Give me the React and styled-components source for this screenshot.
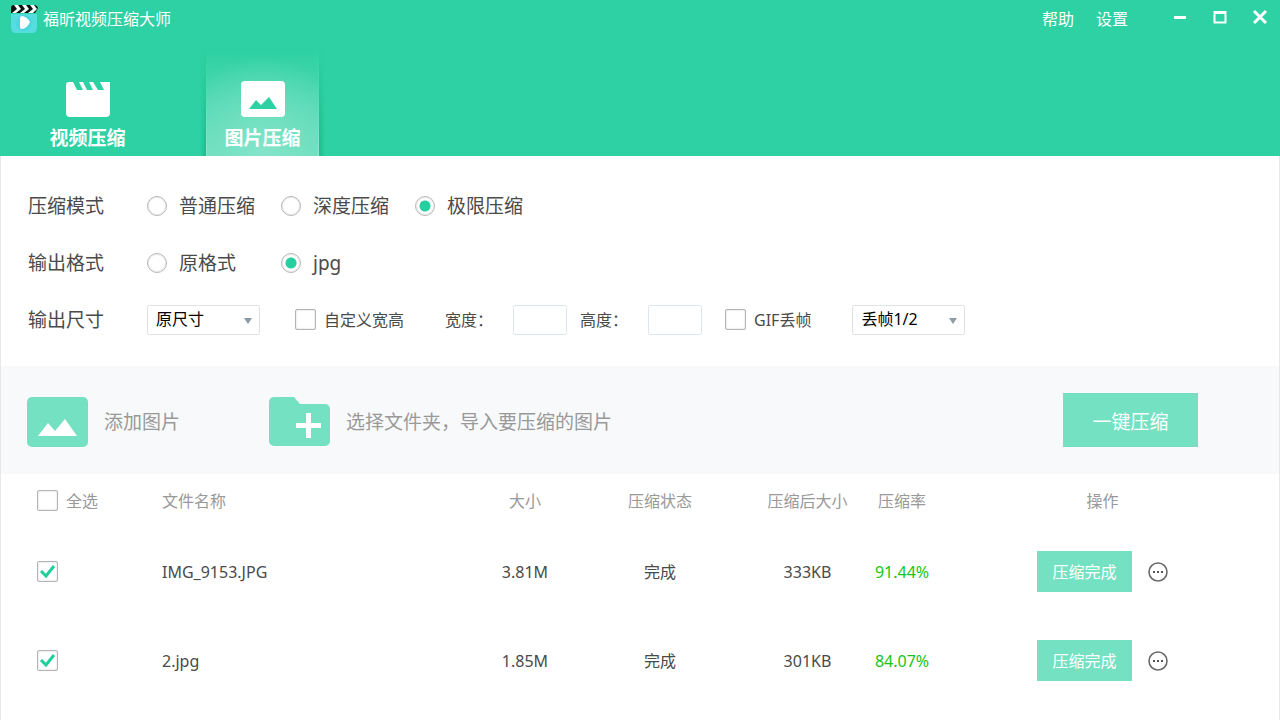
import React, { useState } from "react";
import styled, { createGlobalStyle } from "styled-components";

const files = [
  { id: 1, name: "IMG_9153.JPG", size: "3.81M", status: "完成", after: "333KB", rate: "91.44%" },
  { id: 2, name: "2.jpg", size: "1.85M", status: "完成", after: "301KB", rate: "84.07%" },
];

const modes = ["普通压缩", "深度压缩", "极限压缩"];
const formats = ["原格式", "jpg"];

const LogoIcon = () => (
  <svg width='28' height='30' viewBox='0 0 28 30' aria-hidden='true'>
    <path d='M1 10h26v14q0 5-5 5H6q-5 0-5-5z' fill='#55dde0' />
    <path d='M4 1h20q3 0 4 3l-3 5H1V4q0-3 3-3z' fill='#0c1210' />
    <path
      d='M4 1h4l3 4-5 4H2l5-4zM12 1h4l3 4-5 4h-4l5-4zM20 1h4l3 4-4 4h-5l5-4z'
      fill='#f4fffb'
    />
    <circle cx='14' cy='19' r='8' fill='#4cd7df' />
    <path d='M10 14q0-2 3-2 5 2 7 6-2 5-7 7-3 0-3-2z' fill='#fff' />
  </svg>
);

const ClapperIcon = () => (
  <svg width='44' height='36' viewBox='0 0 44 36' aria-hidden='true'>
    <path
      d='M3 1h4l4 8h6l-4-8h4l4 8h6l-4-8h4l5 8h6l-4-8h10v31a4 4 0 0 1-4 4H4a4 4 0 0 1-4-4V4a3 3 0 0 1 3-3z'
      fill='#fff'
    />
  </svg>
);

const PictureIcon = () => (
  <svg width='44' height='36' viewBox='0 0 44 36' aria-hidden='true'>
    <rect width='44' height='36' rx='4' fill='#fff' />
    <path d='M8 28l7-9 5 5 8-8 8 12z' fill='#2dd1a3' />
  </svg>
);

const AddPictureIcon = () => (
  <svg width='61' height='50' viewBox='0 0 61 50' aria-hidden='true'>
    <rect width='61' height='50' rx='5' fill='#74e1c2' />
    <path d='M11 39l10-13 7 8 10-12 12 17z' fill='#fff' />
  </svg>
);

const FolderIcon = () => (
  <svg width='61' height='50' viewBox='0 0 61 50' aria-hidden='true'>
    <path
      d='M5 0h20l6 7h25a5 5 0 0 1 5 5v32a5 5 0 0 1-5 5H5a5 5 0 0 1-5-5V5a5 5 0 0 1 5-5z'
      fill='#74e1c2'
    />
    <path d='M37 16h5v10h10v5H42v10h-5V31H27v-5h10z' fill='#fff' />
  </svg>
);

const Check = ({ label, ...rest }) => (
  <CheckLabel>
    <CheckBox>
      <input type='checkbox' aria-label={label ? undefined : "选择文件"} {...rest} />
      <svg width='21' height='21' viewBox='0 0 21 21' aria-hidden='true'>
        <path d='M4 10l5 5 8-10' fill='none' stroke='#1fcf9c' strokeWidth='3' />
      </svg>
    </CheckBox>
    {label}
  </CheckLabel>
);

const Dropdown = ({ label, options }) => (
  <SelectBox>
    <select aria-label={label}>
      {options.map((item) => (
        <option key={item}>{item}</option>
      ))}
    </select>
    <svg width='8' height='6' viewBox='0 0 8 6' aria-hidden='true'>
      <path d='M0 0h8L4 6z' fill='#8c9ba5' />
    </svg>
  </SelectBox>
);

const App = () => {
  const [mode, setMode] = useState("极限压缩");
  const [format, setFormat] = useState("jpg");

  return (
    <>
      <GlobalStyle />
      <Window>
        <Header>
          <TitleBar>
            <LogoIcon />
            <h1>福昕视频压缩大师</h1>
            <Menu>
              <a href='#help'>帮助</a>
              <a href='#settings'>设置</a>
            </Menu>
            <WindowButton aria-label='最小化'>
              <svg width='16' height='16' viewBox='0 0 16 16'>
                <path d='M2 8.5h12' stroke='#fff' strokeWidth='3' />
              </svg>
            </WindowButton>
            <WindowButton aria-label='最大化'>
              <svg width='16' height='16' viewBox='0 0 16 16' fill='none'>
                <path d='M2.5 3h11v10.5h-11z' stroke='#fff' strokeWidth='2' />
                <path d='M2 3.5h12' stroke='#fff' strokeWidth='3' />
              </svg>
            </WindowButton>
            <WindowButton aria-label='关闭'>
              <svg width='16' height='16' viewBox='0 0 16 16'>
                <path d='M2 2l12 12M14 2L2 14' stroke='#fff' strokeWidth='3' />
              </svg>
            </WindowButton>
          </TitleBar>
          <Tabs>
            <Tab>
              <ClapperIcon />
              视频压缩
            </Tab>
            <Tab $active>
              <PictureIcon />
              图片压缩
            </Tab>
          </Tabs>
        </Header>

        <Settings>
          <SettingRow role='radiogroup' aria-label='压缩模式'>
            <RowName>压缩模式</RowName>
            <RadioGroup>
              {modes.map((item) => (
                <RadioLabel key={item}>
                  <input
                    type='radio'
                    name='mode'
                    checked={mode === item}
                    onChange={() => setMode(item)}
                  />
                  {item}
                </RadioLabel>
              ))}
            </RadioGroup>
          </SettingRow>
          <SettingRow role='radiogroup' aria-label='输出格式'>
            <RowName>输出格式</RowName>
            <RadioGroup>
              {formats.map((item) => (
                <RadioLabel key={item}>
                  <input
                    type='radio'
                    name='format'
                    checked={format === item}
                    onChange={() => setFormat(item)}
                  />
                  {item}
                </RadioLabel>
              ))}
            </RadioGroup>
          </SettingRow>
          <SettingRow>
            <RowName>输出尺寸</RowName>
            <SizeFields>
              <Dropdown label='输出尺寸' options={["原尺寸"]} />
              <Check label='自定义宽高' />
              <Fields>
                <Field>
                  <span>宽度：</span>
                  <input type='text' />
                </Field>
                <Field>
                  <span>高度：</span>
                  <input type='text' />
                </Field>
              </Fields>
              <GifFields>
                <Check label='GIF丢帧' />
                <Dropdown label='GIF丢帧' options={["丢帧1/2"]} />
              </GifFields>
            </SizeFields>
          </SettingRow>
        </Settings>

        <Toolbar>
          <AddButton>
            <AddPictureIcon />
            添加图片
          </AddButton>
          <AddButton>
            <FolderIcon />
            选择文件夹，导入要压缩的图片
          </AddButton>
          <StartButton>一键压缩</StartButton>
        </Toolbar>

        <FileTable>
          <colgroup>
            <col width='161' />
            <col />
            <col width='90' />
            <col width='180' />
            <col width='115' />
            <col width='74' />
            <col width='340' />
          </colgroup>
          <thead>
            <tr>
              <th>
                <Check label='全选' />
              </th>
              <th>文件名称</th>
              <th>大小</th>
              <th>压缩状态</th>
              <th>压缩后大小</th>
              <th>压缩率</th>
              <th>操作</th>
            </tr>
          </thead>
          <tbody>
            {files.map((file) => (
              <tr key={file.id}>
                <td>
                  <Check defaultChecked />
                </td>
                <td>{file.name}</td>
                <td>{file.size}</td>
                <td>{file.status}</td>
                <td>{file.after}</td>
                <Rate>{file.rate}</Rate>
                <td>
                  <Actions>
                    <DoneButton>压缩完成</DoneButton>
                    <MoreButton aria-label='更多'>
                      <svg width='20' height='20' viewBox='0 0 20 20'>
                        <circle cx='10' cy='10' r='9' fill='none' stroke='#6a6a6a' strokeWidth='1.6' />
                        <path d='M5 9h2v2H5zM9 9h2v2H9zM13 9h2v2h-2z' fill='#555' />
                      </svg>
                    </MoreButton>
                  </Actions>
                </td>
              </tr>
            ))}
          </tbody>
        </FileTable>
      </Window>
    </>
  );
};

const GlobalStyle = createGlobalStyle`
  * {
    box-sizing: border-box;
  }

  body {
    margin: 0;
    background: #fff;
  }

  body, button, input, select {
    font-family: "Noto Sans", "Noto Sans CJK SC", sans-serif;
    font-size: 16px;
    line-height: 24px;
    color: #4a4a4a;
  }

  button {
    padding: 0;
    border: none;
    background: none;
    cursor: pointer;
  }

  svg {
    display: block;
    flex: none;
  }
`;

const Window = styled.div`
  min-height: 100vh;
  min-width: 1000px;
  border: solid #e6e8ea;
  border-width: 0 1px;
`;

const Header = styled.header`
  margin: 0 -1px;
  background: #2dd1a3;
  color: #fff;
`;

const TitleBar = styled.div`
  height: 38px;
  padding-left: 10px;
  display: flex;
  align-items: center;

  h1 {
    margin: 0 auto 0 5px;
    font-size: 16px;
    font-weight: 400;
  }
`;

const Menu = styled.nav`
  display: flex;
  gap: 22px;
  margin-right: 32px;

  a {
    color: inherit;
    text-decoration: none;
  }
`;

const WindowButton = styled.button`
  width: 40px;
  height: 34px;
  align-self: flex-start;
  display: grid;
  place-items: center;
`;

const Tabs = styled.nav`
  display: flex;
  gap: 64px;
  padding: 12px 32px 0;
`;

const Tab = styled.button`
  position: relative;
  width: 111px;
  height: 106px;
  padding-top: 31px;
  display: flex;
  flex-direction: column;
  align-items: center;
  gap: 7px;
  color: #fff;
  font-size: 19px;
  line-height: 28px;
  font-weight: 700;
  background: ${({ $active }) =>
    $active
      ? "radial-gradient(ellipse 90px 100px at 50% 100%, rgba(134, 229, 202, 0.9), rgba(116, 224, 193, 0.6) 55%, rgba(116, 224, 193, 0)), linear-gradient(rgba(116, 224, 193, 0), #74e0c1)"
      : "none"};

  /* side edges of the active tab, fading out towards the top */
  &::before, &::after {
    content: "";
    display: ${({ $active }) => ($active ? "block" : "none")};
    position: absolute;
    top: 0;
    bottom: 0;
    width: 6px;
    mask-image: linear-gradient(transparent, #000);
  }

  &::before {
    right: 100%;
    border-right: 1px solid #8fe8cf;
    background: linear-gradient(to left, rgba(18, 160, 120, 0.5), rgba(18, 160, 120, 0));
  }

  &::after {
    left: 100%;
    border-left: 1px solid #8fe8cf;
    background: linear-gradient(to right, rgba(18, 160, 120, 0.5), rgba(18, 160, 120, 0));
  }
`;

const Settings = styled.section`
  padding: 21px 27px 18px;
`;

const SettingRow = styled.div`
  height: 57px;
  display: flex;
  align-items: center;
`;

const RowName = styled.span`
  width: 119px;
  font-size: 19px;
`;

const RadioGroup = styled.div`
  display: flex;
  gap: 26px;
`;

const RadioLabel = styled.label`
  min-width: 108px;
  display: flex;
  align-items: center;
  gap: 12px;
  font-size: 19px;

  input {
    appearance: none;
    width: 20px;
    height: 20px;
    margin: 0;
    border: 1px solid #b8b8b8;
    border-radius: 50%;
    background: #fff;
    box-shadow: inset 0 0 2px #ccc;
  }

  input:checked {
    background: radial-gradient(circle, #26cf9f 5px, #fff 6px);
  }
`;

const SizeFields = styled.div`
  display: flex;
  align-items: center;
  gap: 35px;
`;

const SelectBox = styled.div`
  position: relative;

  select {
    appearance: none;
    display: block;
    width: 113px;
    height: 30px;
    padding: 0 24px 2px 8px;
    border: 1px solid #e0e3e6;
    border-radius: 2px;
    background: #fff;
    color: #000;
  }

  svg {
    position: absolute;
    right: 8px;
    top: 13px;
    pointer-events: none;
  }
`;

const CheckLabel = styled.label`
  display: flex;
  align-items: center;
  gap: 8px;
`;

const CheckBox = styled.span`
  position: relative;

  input {
    appearance: none;
    display: block;
    width: 21px;
    height: 21px;
    margin: 0;
    border: 1px solid #b4b4b4;
    border-radius: 2px;
    background: #fff;
    box-shadow: inset 0 0 2px #ccc;
  }

  svg {
    position: absolute;
    left: 0;
    top: 0;
    visibility: hidden;
    pointer-events: none;
  }

  input:checked + svg {
    visibility: visible;
  }
`;

const Fields = styled.div`
  display: flex;
  gap: 13px;
  margin-left: 6px;
`;

const Field = styled.label`
  display: flex;
  align-items: center;

  span {
    width: 68px;
  }

  input {
    width: 54px;
    height: 30px;
    padding: 0 6px;
    border: 1px solid #dfe7ec;
    border-radius: 2px;
  }
`;

const GifFields = styled.div`
  display: flex;
  align-items: center;
  gap: 41px;
  margin-left: -12px;
`;

const Toolbar = styled.section`
  height: 108px;
  padding: 0 81px 0 26px;
  display: flex;
  align-items: center;
  gap: 89px;
  background: #f7f9fb;
`;

const AddButton = styled.button`
  display: flex;
  align-items: center;
  gap: 16px;
  padding-top: 3px;
  color: #999;
  font-size: 19px;
`;

const StartButton = styled.button`
  width: 135px;
  height: 54px;
  padding-top: 3px;
  margin-left: auto;
  background: #74e1c2;
  color: #fff;
  font-size: 19px;
`;

const FileTable = styled.table`
  width: 100%;
  table-layout: fixed;
  border-collapse: collapse;

  th, td {
    padding: 0;
    text-align: center;
    font-weight: 400;
  }

  th {
    height: 53px;
    color: #999;
  }

  td {
    height: 89px;
  }

  th:first-child, td:first-child {
    padding-left: 36px;
    text-align: left;
  }

  th:nth-child(2), td:nth-child(2) {
    text-align: left;
  }

  th:last-child, td:last-child {
    padding-right: 13px;
  }
`;

const Rate = styled.td`
  color: #16c516;
`;

const Actions = styled.div`
  display: flex;
  justify-content: center;
  align-items: center;
  gap: 16px;
`;

const DoneButton = styled.button`
  width: 95px;
  height: 41px;
  background: #74e1c2;
  color: #fff;
`;

const MoreButton = styled.button`
  display: block;
`;

export default App;
